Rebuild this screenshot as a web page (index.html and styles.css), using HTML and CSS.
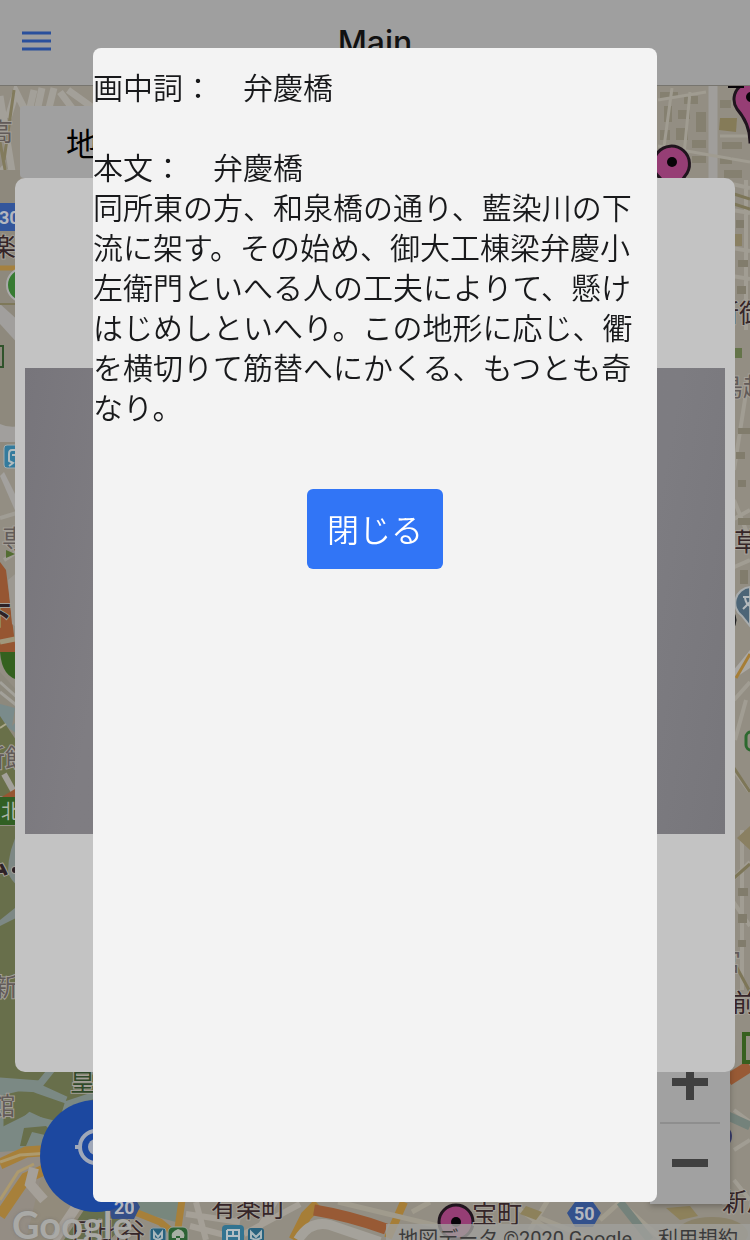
FILE: index.html
```html
<!DOCTYPE html>
<html lang="ja">
<head>
<meta charset="utf-8">
<meta name="viewport" content="width=device-width, initial-scale=1">
<title>Main</title>
<link rel="stylesheet" href="styles.css">
</head>
<body>
<div class="app">
  <header class="header">
    <button class="menu" type="button" aria-label="メニュー">
      <svg viewBox="0 0 30 20" width="30" height="20"><path d="M0 2H29M0 10H29M0 18H29" stroke="#2a509c" stroke-width="3"/></svg>
    </button>
    <h1 class="title">Main</h1>
  </header>

  <main class="stage">
    <svg class="map" viewBox="0 86 750 1154" preserveAspectRatio="xMidYMid slice" role="img" aria-label="地図">
      <rect y="86" width="750" height="1154" fill="#938e83"/>

      <!-- north-west streets -->
      <g fill="none" stroke="#a3a099" stroke-width="7">
        <path d="M8 118L16 92L28 116L34 90M42 88L36 116M54 88L48 112M60 92L78 116M68 90L96 110"/>
        <path d="M0 96L14 184M0 168L22 186"/>
      </g>
      <g fill="none" stroke="#827b5d" stroke-width="3">
        <path d="M0 142L8 186M14 90L4 160M0 200L22 190M10 184L16 204"/>
      </g>

      <!-- west strip -->
      <path d="M0 170H20V450H0z" fill="#8e897d"/>
      <path d="M0 304L20 322V346L0 324z" fill="#a19f9d"/>
      <path d="M0 268H20" stroke="#a5813f" stroke-width="5"/>
      <path d="M0 304H20" stroke="#7e7859" stroke-width="2"/>
      <path d="M0 424Q8 428 20 426V442H0z" fill="#a19f9d"/>
      <path d="M0 476L20 522V504L4 472z" fill="#a3a19e"/>
      <path d="M0 518L20 512M4 560L20 550" stroke="#a09d95" stroke-width="4"/>
      <path d="M0 562L6 570L16 652H0z" fill="#965632"/>
      <path d="M8 580L20 570V630L12 624z" fill="#9c9891"/>
      <path d="M0 642L20 638" stroke="#a0977c" stroke-width="5"/>
      <path d="M0 652H20V680Q2 678 0 652" fill="#34611f"/>
      <path d="M0 672L20 694V802H0z" fill="#8d897d"/>
      <path d="M0 682L20 700M0 692L20 708" stroke="#a3a19a" stroke-width="3"/>
      <path d="M0 704L15 708L12 726L20 718V736L0 722z" fill="#7a8b8b"/>
      <path d="M0 716L20 746V796H0z" fill="#697049"/>
      <path d="M0 728L6 724" stroke="#aba88b" stroke-width="2"/>
      <path d="M4 774L14 792" stroke="#a3a19a" stroke-width="6"/>
      <path d="M0 798L20 786V800H0z" fill="#965632"/>
      <rect y="797" width="20" height="28" fill="#315f23"/>
      <path d="M0 826H20V1070H0z" fill="#686f4b"/>
      <path d="M20 828Q8 850 8 872Q10 880 20 888z" fill="#7d8885"/>
      <path d="M0 920L20 904V916L0 926z" fill="#7d8885"/>

      <!-- palace grounds -->
      <path d="M0 1000H100V1160H0z" fill="#686f4b"/>
      <path d="M0 1081L40 1084L56 1064L98 1072V1094L68 1104L60 1130L30 1116L0 1142V1092L26 1086L66 1100L42 1089L0 1087z" fill="none" stroke="#7b8984" stroke-width="7"/>
      <path d="M0 1128L28 1114L60 1122L62 1154H0z" fill="#7b8984"/>
      <path d="M24 1128L46 1126L58 1138L32 1132L26 1146L20 1146z" fill="#686f4b"/>

      <!-- southern districts -->
      <path d="M0 1152L50 1148V1240H0z" fill="#948d84"/>
      <path d="M44 1164L100 1190V1240H26z" fill="#928b7c"/>
      <path d="M0 1164L26 1152L56 1150L44 1170L26 1178L0 1216" fill="none" stroke="#a7803a" stroke-width="11"/>
      <path d="M0 1162L20 1155L50 1153M34 1164L18 1172L0 1200" fill="none" stroke="#ad9a6e" stroke-width="3"/>
      <path d="M34 1168L30 1184L44 1200M54 1240L78 1204" fill="none" stroke="#a5a099" stroke-width="10"/>
      <path d="M88 1204L64 1240H110L140 1206z" fill="#68704d"/>
      <path d="M138 1198H184L176 1222L138 1212z" fill="#78877d"/>
      <path d="M130 1210L160 1222L182 1240M182 1200L178 1228" fill="none" stroke="#a7803a" stroke-width="7"/>
      <path d="M186 1214L240 1222M190 1226L236 1238M196 1202L206 1240M276 1200L252 1240M244 1234L300 1204" fill="none" stroke="#a5a097" stroke-width="6"/>
      <path d="M318 1204L306 1216L294 1240" fill="none" stroke="#a67e37" stroke-width="11"/>
      <path d="M298 1240Q310 1220 330 1225L380 1242" fill="none" stroke="#a5a29b" stroke-width="10"/>
      <path d="M314 1210Q350 1216 386 1229" fill="none" stroke="#985a35" stroke-width="11"/>
      <path d="M404 1202L388 1238" stroke="#a67e37" stroke-width="8"/>
      <path d="M338 1202L438 1226M412 1212L430 1202M512 1204L560 1238M530 1230L548 1200M600 1220L620 1202L660 1238M540 1218L590 1238" fill="none" stroke="#a09b8d" stroke-width="5"/>
      <path d="M620 1202L650 1240" stroke="#74827b" stroke-width="8"/>
      <path d="M526 1206L542 1212L536 1220L520 1214zM666 1208L690 1206L698 1216L680 1220z" fill="#8d815b"/>
      <ellipse cx="712" cy="1234" rx="36" ry="17" fill="#8a826a"/>

      <!-- north-east blocks -->
      <g fill="#858070">
        <path d="M660 92h18v6h-18zM684 96h14v8h-14zM664 106h8v16h-8zM678 110h12v9h-12zM696 112h10v20h-10zM660 130h10v10h-10zM676 128h12v12h-12zM692 140h14v8h-14zM692 156h14v7h-14zM720 100h11v8h-11zM722 142h20v7h-20zM720 157h12v7h-12zM724 170h18v8h-18z"/>
      </g>
      <path d="M720 118L737 118L736 132L719 130z" fill="#857b58"/>
      <path d="M713 86V180" stroke="#a09e9b" stroke-width="9"/>
      <path d="M658 100L706 92M672 88L660 176M690 92L682 176M658 146L750 162M720 136H750" fill="none" stroke="#a09c91" stroke-width="3"/>

      <!-- east strip -->
      <g fill="none" stroke="#a19d93" stroke-width="4">
        <path d="M732 184L750 188M746 180V330M732 210L750 213M732 248L750 251M732 276L750 279M734 470L748 380M734 500L750 540M732 520L750 510M732 568L750 560M734 700L750 682M735 740L746 700M734 878L750 862M732 900L750 926M742 830V990M734 770L750 792M734 1110L750 1122M734 1150L750 1140M734 1180L750 1200"/>
      </g>
      <path d="M734 194L750 199M734 204L750 209M734 768L750 792M734 878L750 864M736 966L750 992" fill="none" stroke="#7d7658" stroke-width="3"/>
      <g fill="#817c6c">
        <path d="M736 220h8v8h-8zM738 260h10v7h-10zM737 286h9v8h-9zM738 428h12v6h-12zM736 452h9v7h-9zM738 480h8v7h-8zM738 518h12v7h-12zM740 570h8v14h-8zM738 888h10v8h-10zM738 914h9v9h-9zM738 940h8v7h-8z"/>
      </g>
      <path d="M735 234H742V246H735zM737 838L750 826V850z" fill="#8a8062"/>
      <rect x="735" y="348" width="7" height="10" fill="#647449"/>
      <path d="M732 672L750 650V668L732 680z" fill="#aaa8a4"/>
      <path d="M736 678L750 654" stroke="#a67e37" stroke-width="3"/>
      <path d="M728 1080L750 1066" stroke="#985a35" stroke-width="12"/>
      <path d="M728 1116L750 1126" stroke="#74827b" stroke-width="9"/>

      <!-- road shields -->
      <path d="M-18 203H17V231H-18z" fill="#33569c"/>
      <text class="shield" x="-1" y="224">30</text>
      <path d="M112 1196H134L140 1207L134 1219H112L106 1207z" fill="#344f88"/>
      <path d="M575 1202H593L601 1213L593 1227H575L567 1213z" fill="#33518c"/>
      <text class="shield" x="574" y="1220">50</text>

      <!-- transit and place symbols -->
      <circle cx="24" cy="285" r="17" fill="#377b32" stroke="#aaa" stroke-width="2"/>
      <path d="M-12 346H3V367H-12" fill="none" stroke="#30532b" stroke-width="2"/>
      <rect x="4" y="445" width="24" height="23" rx="3" fill="#347b9d" stroke="#a1adb0"/>
      <path d="M16 450H12Q9 450 9 454V461L13 463L9 466M12 455H17" fill="none" stroke="#b1bcbf" stroke-width="2"/>
      <path d="M6 550L15 554L6 558z" fill="#536d32"/>
      <path d="M733 611Q740 619 733 630" fill="#222"/>
      <path d="M750 587A16 16 0 0 0 742 616L750 626z" fill="#4c6577" stroke="#a8acad" stroke-width="2"/>
      <path d="M743 597H750M745 598Q746 604 750 606M750 602L743 609" fill="none" stroke="#b4babd" stroke-width="2"/>
      <rect x="746" y="732" width="20" height="18" rx="5" fill="none" stroke="#2d692f" stroke-width="3"/>
      <path d="M750 1034H744V1062H750" fill="none" stroke="#37601f" stroke-width="4"/>
      <path d="M728 1127Q736 1136 728 1146" fill="#383c6b"/>
      <rect x="150" y="1228" width="16" height="20" rx="3" fill="#28627e" stroke="#899ba2"/>
      <path d="M154 1232L158 1237L162 1232V1238L158 1240L154 1238z" fill="none" stroke="#a7b7bd" stroke-width="2"/>
      <rect x="168" y="1227" width="20" height="20" rx="5" fill="#2c6334" stroke="#9ca39a"/>
      <path d="M178 1229Q170 1232 172 1238H184Q186 1231 178 1229zM176 1236H180V1240H176z" fill="#a7b0a4"/>
      <rect x="222" y="1225" width="22" height="24" rx="4" fill="#337491"/>
      <path d="M227 1230H239V1240M227 1230V1240M227 1236H239M233 1230V1236" fill="none" stroke="#b3bfc4" stroke-width="2"/>
      <rect x="248" y="1228" width="16" height="18" rx="3" fill="#28627e"/>
      <path d="M251 1232L256 1237L261 1232V1238L256 1240L251 1238z" fill="none" stroke="#a7b7bd" stroke-width="2"/>

      <!-- place names -->
      <g class="place">
        <text class="muted" x="-12" y="141">高</text>
        <text x="-9" y="256">楽</text>
        <text class="muted" x="2" y="548">専</text>
        <text class="strong" x="-14" y="624">下</text>
        <text class="muted" x="-20" y="767">新館</text>
        <text class="onGreen" x="1" y="819">北</text>
        <text class="strong" x="-16" y="874">ム</text>
        <circle cx="15" cy="870" r="3" fill="#2e2226"/>
        <text class="muted" x="-7" y="996">新</text>
        <text class="muted" x="-10" y="1115">館</text>
        <text class="green" x="70" y="1091">皇居</text>
        <text x="714" y="322">新御</text>
        <text class="muted" x="718" y="396">鳥越</text>
        <text x="734" y="551">草</text>
        <text class="muted" x="716" y="971">宮</text>
        <text x="732" y="1012">前</text>
        <text x="722" y="1211">新川</text>
        <text x="211" y="1217">有楽町</text>
        <text x="70" y="1241">日比谷</text>
      </g>

      <!-- pins -->
      <g fill="#963e75" stroke="#20151e" stroke-width="3">
        <path d="M672 206Q670 190 660 178A18 18 0 1 1 685 176Q674 190 672 206z"/>
        <path d="M750 142Q750 124 737 109A17 17 0 1 1 765 109Q753 124 753 142z"/>
        <circle cx="456" cy="1222" r="17"/>
      </g>
      <g fill="#080408">
        <circle cx="672" cy="162" r="5"/><circle cx="751" cy="97" r="5"/><circle cx="456" cy="1222" r="5"/>
        <path d="M728 86H744V88H728z"/>
      </g>
      <g class="place"><text x="472" y="1223">宝町</text></g>
    </svg>

    <button class="tab" type="button">地図</button>

    <div class="zoom">
      <button class="zoomButton" type="button" aria-label="拡大">
        <svg viewBox="0 0 36 36" width="36" height="36"><path d="M14 0H22V14H36V22H22V36H14V22H0V14H14z" fill="#404040"/></svg>
      </button>
      <button class="zoomButton" type="button" aria-label="縮小">
        <svg viewBox="0 0 36 36" width="36" height="36"><path d="M0 14H36V22H0z" fill="#404040"/></svg>
      </button>
    </div>

    <button class="locate" type="button" aria-label="現在地">
      <svg viewBox="0 0 44 44" width="44" height="44"><circle cx="22" cy="22" r="16" fill="none" stroke="#a0a8b8" stroke-width="4"/><circle cx="22" cy="22" r="8" fill="#a0a8b8"/><path d="M1 22H6M38 22H43M22 1V6M22 38V43" stroke="#a0a8b8" stroke-width="4"/></svg>
    </button>
    <svg class="badge" viewBox="0 0 20 18" width="20" height="18" aria-hidden="true"><text class="shield" x="0" y="16">20</text></svg>
    <span class="brand">Google</span>
    <footer class="credits"><span>地図データ ©2020 Google</span><a class="terms" href="#terms">利用規約</a></footer>

    <section class="card" aria-label="絵図"><div class="photo"></div></section>
  </main>
</div>

<div class="overlay">
  <div class="modal" role="dialog" aria-modal="true" aria-label="弁慶橋">
    <p class="text">画中詞：　弁慶橋</p>
    <p class="text">本文：　弁慶橋<br>同所東の方、和泉橋の通り、藍染川の下流に架す。その始め、御大工棟梁弁慶小左衛門といへる人の工夫によりて、懸けはじめしといへり。この地形に応じ、衢を横切りて筋替へにかくる、もつとも奇なり。</p>
    <button class="close" type="button">閉じる</button>
  </div>
</div>
</body>
</html>
```
FILE: styles.css
```css
* {
  box-sizing: border-box;
}

body {
  margin: 0;
  font-family: "Noto Sans CJK JP", "Noto Sans", sans-serif;
  color: #18191b;
  background: #938e83;
}

button {
  margin: 0;
  padding: 0;
  border: 0;
  font: inherit;
  color: inherit;
  cursor: pointer;
}

.app {
  display: flex;
  flex-direction: column;
  height: 100vh;
  overflow: hidden;
}

.header {
  display: grid;
  grid-template-columns: 1fr auto 1fr;
  align-items: center;
  flex: none;
  height: 86px;
  padding: 0 22px;
  background: #9f9f9f;
  border-bottom: 1px solid #77756f;
}

.menu {
  display: flex;
  justify-self: start;
  padding-bottom: 4px;
  background: none;
}

.title {
  margin: 0;
  font: 500 32px/40px Inter, sans-serif;
  color: #111;
}

.stage {
  position: relative;
  flex: 1;
  min-height: 0;
  overflow: hidden;
}

.map {
  position: absolute;
  inset: 0;
  width: 100%;
  height: 100%;
}

.shield {
  font: 700 18px "Roboto", sans-serif;
  fill: #b4b7bf;
}

.place {
  font-size: 25px;
  fill: #352528;
  stroke: #a39f97;
  stroke-width: 2px;
  paint-order: stroke;
}

.place .muted {
  fill: #625b59;
}

.place .strong {
  font-weight: 700;
  fill: #2e2226;
}

.place .green {
  fill: #304a29;
}

.place .onGreen {
  font-size: 20px;
  fill: #acb4a6;
  stroke: none;
}

.tab {
  position: absolute;
  top: 20px;
  left: 20px;
  width: 50%;
  height: 72px;
  padding-left: 46px;
  border-radius: 4px;
  background: #a0a0a0;
  color: #000;
  font-size: 32px;
  line-height: 72px;
  text-align: left;
}

.card {
  position: absolute;
  inset: 92px 15px 168px;
  display: flex;
  flex-direction: column;
  justify-content: center;
  padding: 0 10px 48px;
  border-radius: 10px;
  background: #c3c3c3;
}

.photo {
  flex: 0 1 466px;
  background: linear-gradient(100deg, #77757b, #7f7d82 16%, #7d7c81 84%, #77767b);
}

.zoom {
  position: absolute;
  right: 20px;
  bottom: 36px;
  width: 80px;
  padding: 0 10px 2px;
  background: #a1a1a1;
  box-shadow: 0 2px 6px #0004;
}

.zoomButton {
  display: flex;
  align-items: center;
  justify-content: center;
  width: 100%;
  height: 80px;
  background: none;
}

.zoomButton + .zoomButton {
  border-top: 2px solid #8e8e8e;
}

.locate {
  position: absolute;
  left: 40px;
  bottom: 28px;
  display: flex;
  align-items: center;
  justify-content: center;
  width: 112px;
  height: 112px;
  padding-bottom: 18px;
  border-radius: 50%;
  background: #1c48a0;
}

.badge {
  position: absolute;
  left: 114px;
  bottom: 24px;
}

.brand {
  position: absolute;
  left: 12px;
  bottom: -6px;
  font: 700 38px/44px Lato, sans-serif;
  color: #a9a9a6;
  text-shadow: 0 0 3px #6668;
}

.credits {
  position: absolute;
  right: 0;
  bottom: 0;
  display: flex;
  gap: 26px;
  height: 16px;
  padding: 0 12px;
  background: #a0a09ccc;
  color: #3b3b3b;
  font: 20px/30px Roboto, "Noto Sans CJK JP", sans-serif;
  white-space: nowrap;
}

.terms {
  color: inherit;
  text-decoration: none;
}

.overlay {
  position: fixed;
  inset: 0;
  display: flex;
  justify-content: center;
  padding: 48px 0 38px;
}

.modal {
  display: flex;
  flex-direction: column;
  width: 75.2%;
  padding-top: 18px;
  overflow: auto;
  border-radius: 8px;
  background: #f3f3f3;
}

.text {
  margin: 0 0 40px;
  font-size: 30px;
  font-weight: 350;
  line-height: 40px;
}

.close {
  align-self: center;
  flex: none;
  margin-top: 23px;
  padding: 15px 20px 17px;
  border-radius: 6px;
  background: #3175f6;
  color: #fff;
  font-size: 32px;
  font-weight: 350;
  line-height: 48px;
}
```
